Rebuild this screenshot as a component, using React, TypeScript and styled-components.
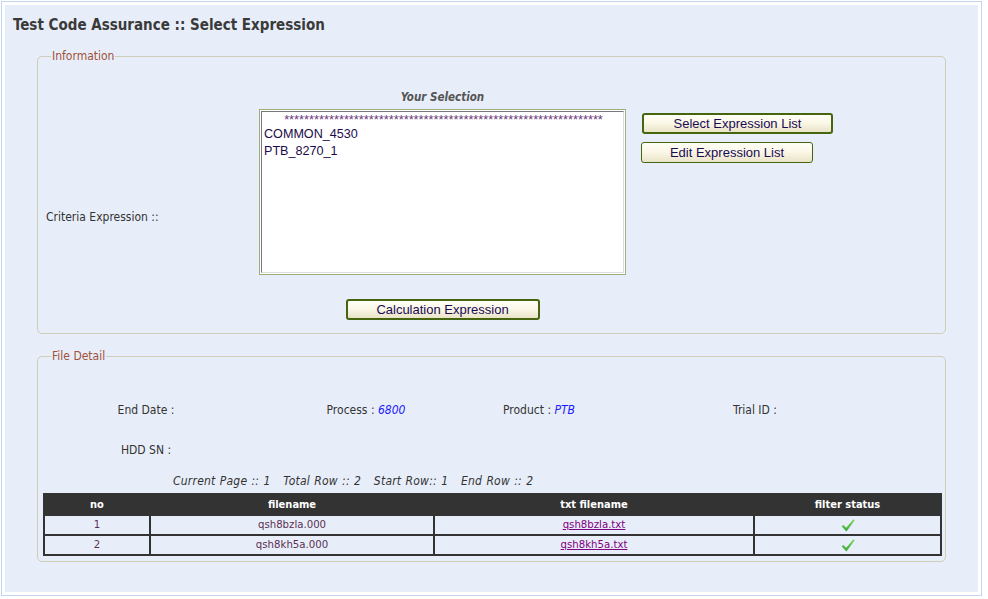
import React from "react";
import styled, { createGlobalStyle } from "styled-components";

const Global = createGlobalStyle`
  html, body { margin: 0; padding: 0; background: #ffffff; }
  body { font-family: "DejaVu Sans Condensed", "DejaVu Sans", sans-serif; font-size: 12px; color: #333; }
`;

const Frame = styled.div`
  margin: 1px 0 0 1px;
  width: 981px;
  height: 595px;
  box-sizing: border-box;
  border: 1px solid #c3d5f2;
  padding: 3px;
  background: #fff;
`;

const Inner = styled.div`
  height: 100%;
  background: #e8eef9;
  padding: 11px 0 0 0;
  box-sizing: border-box;
`;

const Title = styled.h1`
  margin: 0 0 0 8px;
  font-size: 15px;
  line-height: 18px;
  font-weight: bold;
  color: #3a3a3a;
`;

const Box = styled.fieldset<{ $top: number }>`
  margin: ${(p) => p.$top}px 32px 0 32px;
  padding: 0;
  border: 1px solid #cfcdb6;
  border-radius: 5px;
  min-width: 0;
`;

const Legend = styled.legend`
  margin-left: 13px;
  padding: 0 1px;
  font-size: 12px;
  line-height: 14px;
  color: #a0523a;
`;

const InfoGrid = styled.div`
  display: grid;
  grid-template-columns: 213px 367px auto;
  padding: 27px 0 13px 8px;
`;

const Caption = styled.div`
  grid-column: 2;
  text-align: center;
  font-style: italic;
  font-weight: bold;
  font-size: 11.5px;
  line-height: 14px;
  color: #555;
  margin-bottom: 5px;
`;

const CriteriaLabel = styled.div`
  grid-column: 1;
  align-self: center;
  color: #333;
  padding-top: 4px;
`;

const CenterCol = styled.div`
  display: flex;
  flex-direction: column;
  align-items: center;
`;

const SelectionOuter = styled.div`
  width: 367px;
  height: 166px;
  box-sizing: border-box;
  border: 1px solid #a2ad7c;
  padding: 1px;
  background: #fff;
`;

const SelectionInner = styled.div`
  height: 100%;
  box-sizing: border-box;
  border-style: solid;
  border-width: 1px;
  border-color: #7a7a7a #dcdcdc #dcdcdc #7a7a7a;
  padding: 0 2px;
  font-family: "Liberation Sans", Arial, sans-serif;
`;

const Stars = styled.div`
  text-align: center;
  font-size: 12.8px;
  line-height: 12px;
  height: 12px;
  color: #6a3a7a;
  padding: 2px 0 0 2px;
  overflow: hidden;
  white-space: nowrap;
`;

const SelItem = styled.div`
  font-size: 12.6px;
  line-height: 17px;
  color: #1c0a4a;
  &:first-of-type { margin-top: 3px; }
`;

const SideCol = styled.div`
  display: flex;
  flex-direction: column;
  align-items: flex-start;
  padding: 4px 0 0 15px;
  gap: 8px;
`;

const Button = styled.button<{ $w: number; $strong?: boolean; $shift?: number }>`
  width: ${(p) => p.$w}px;
  height: 21px;
  margin-left: ${(p) => p.$shift || 0}px;
  box-sizing: border-box;
  border: ${(p) => (p.$strong ? 2 : 1)}px solid #46650f;
  border-radius: 3px;
  background: linear-gradient(#fffff6 0%, #fbf8e8 45%, #e9e3c7 100%);
  font-family: "Liberation Sans", Arial, sans-serif;
  font-size: 13px;
  color: #1a0a55;
  padding: 0;
  line-height: 17px;
  cursor: pointer;
`;

const CalcButton = styled(Button)`
  margin-top: 24px;
`;

const DetailGrid = styled.div`
  display: grid;
  grid-template-columns: 204px 236px 110px 322px;
  grid-auto-rows: 14px;
  row-gap: 26px;
  padding: 40px 0 0 6px;
`;

const DetailCell = styled.div`
  text-align: center;
  color: #333;
  line-height: 14px;
`;

const Value = styled.span`
  color: #1a1aff;
  font-style: italic;
`;

const Pager = styled.div`
  padding: 17px 0 0 135px;
  font-style: italic;
  line-height: 14px;
  color: #333;
  letter-spacing: 0.22px;
  word-spacing: 0.6px;
  white-space: pre;
`;

const TableWrap = styled.div`
  padding: 5px 5px 5px 5px;
`;

const Table = styled.table`
  width: 897px;
  border-collapse: collapse;
  table-layout: fixed;
`;

const Th = styled.th`
  background: #333333;
  color: #fff;
  font-weight: bold;
  height: 19px;
  padding: 0;
  font-size: 11px;
  border: 2px solid #333;
`;

const Td = styled.td`
  border: 2px solid #333;
  height: 18px;
  padding: 0;
  text-align: center;
  color: #5a3052;
  font-size: 11.3px;
  line-height: 16px;
`;

const TxtLink = styled.a`
  color: #800080;
  text-decoration: underline;
`;

const Check = () => (
  <svg width="16" height="15" viewBox="0 0 16 15" style={{ verticalAlign: "middle" }}>
    <defs>
      <linearGradient id="ck" x1="0" y1="0" x2="0" y2="1">
        <stop offset="0" stopColor="#7ddc66" />
        <stop offset="1" stopColor="#3aa533" />
      </linearGradient>
    </defs>
    <path d="M1.5 8.2 L3.4 6.9 L6.2 9.8 L13.4 1.2 L14.8 2.2 L6.4 13.6 Z" fill="url(#ck)" />
  </svg>
);

const rows = [
  { no: 1, file: "qsh8bzla.000", txt: "qsh8bzla.txt" },
  { no: 2, file: "qsh8kh5a.000", txt: "qsh8kh5a.txt" },
];

const columns = [
  { label: "no", w: 106 },
  { label: "filename", w: 284 },
  { label: "txt filename", w: 320 },
  { label: "filter status", w: 187 },
];

export default function App() {
  return (
    <>
      <Global />
      <Frame>
        <Inner>
          <Title>Test Code Assurance :: Select Expression</Title>
          <Box $top={15}>
            <Legend>Information</Legend>
            <InfoGrid>
              <Caption>Your Selection</Caption>
              <CriteriaLabel>Criteria Expression ::</CriteriaLabel>
              <CenterCol>
                <SelectionOuter>
                  <SelectionInner>
                    <Stars>{"*".repeat(64)}</Stars>
                    <SelItem>COMMON_4530</SelItem>
                    <SelItem>PTB_8270_1</SelItem>
                  </SelectionInner>
                </SelectionOuter>
                <CalcButton $w={194} $strong>Calculation Expression</CalcButton>
              </CenterCol>
              <SideCol>
                <Button $w={191} $strong $shift={1}>Select Expression List</Button>
                <Button $w={172}>Edit Expression List</Button>
              </SideCol>
            </InfoGrid>
          </Box>
          <Box $top={15}>
            <Legend>File Detail</Legend>
            <DetailGrid>
              <DetailCell>End Date :</DetailCell>
              <DetailCell>Process : <Value>6800</Value></DetailCell>
              <DetailCell>Product : <Value>PTB</Value></DetailCell>
              <DetailCell>Trial ID :</DetailCell>
              <DetailCell>HDD SN :</DetailCell>
            </DetailGrid>
            <Pager>{"Current Page :: 1   Total Row :: 2   Start Row:: 1   End Row :: 2"}</Pager>
            <TableWrap>
              <Table>
                <colgroup>
                  {columns.map((c) => (
                    <col key={c.label} style={{ width: c.w }} />
                  ))}
                </colgroup>
                <thead>
                  <tr>
                    {columns.map((c) => (
                      <Th key={c.label}>{c.label}</Th>
                    ))}
                  </tr>
                </thead>
                <tbody>
                  {rows.map((r) => (
                    <tr key={r.no}>
                      <Td>{r.no}</Td>
                      <Td>{r.file}</Td>
                      <Td><TxtLink href="#">{r.txt}</TxtLink></Td>
                      <Td><Check /></Td>
                    </tr>
                  ))}
                </tbody>
              </Table>
            </TableWrap>
          </Box>
        </Inner>
      </Frame>
    </>
  );
}
